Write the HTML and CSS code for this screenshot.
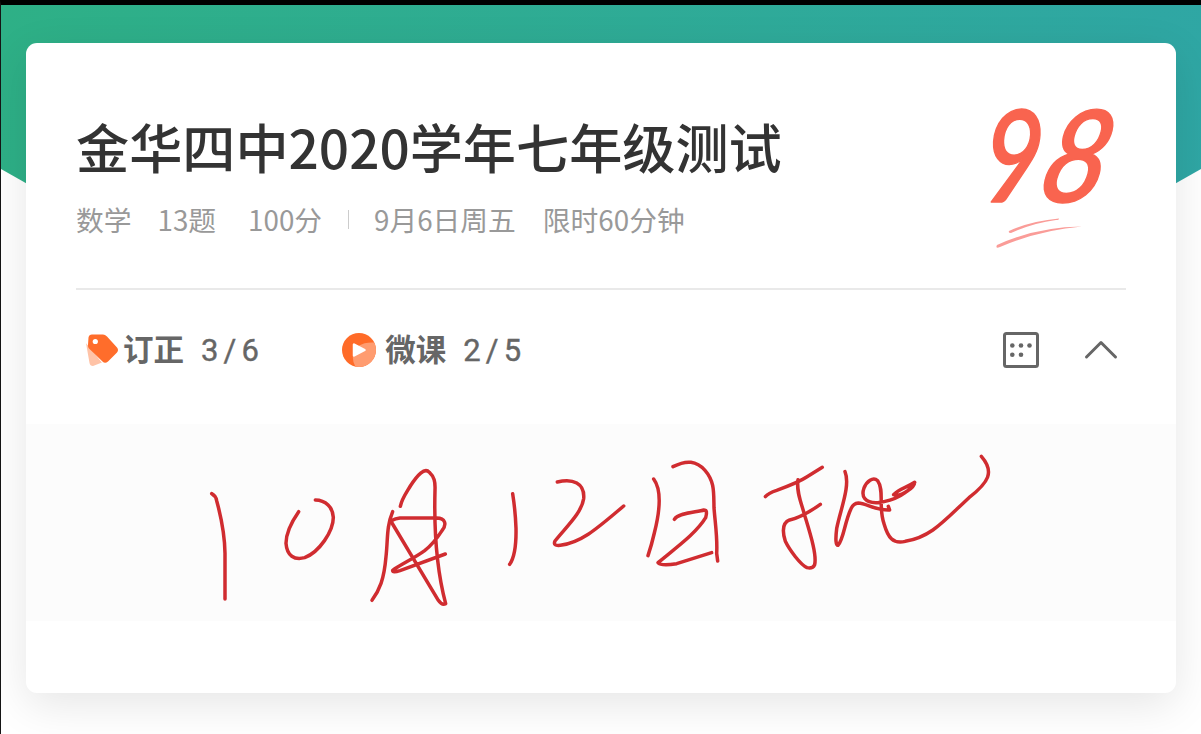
FILE: index.html
```html
<!DOCTYPE html>
<html lang="zh-CN">
<head>
<meta charset="utf-8">
<title>金华四中2020学年七年级测试</title>
<link rel="stylesheet" href="styles.css">
</head>
<body>
<div class="page">
  <div class="banner"></div>
  <main class="card">
    <header class="summary">
      <div class="heading">
        <h1 class="title">金华四中2020学年七年级测试</h1>
        <div class="meta">
          <span class="subject">数学</span>
          <span class="count">13题</span>
          <span class="points">100分</span>
          <i class="divider"></i>
          <span class="date">9月6日周五</span>
          <span>限时60分钟</span>
        </div>
      </div>
      <svg class="score" viewBox="0 0 170 170">
        <g class="digits">
          <text transform="translate(11 112) skewX(-3) scale(.82 1)">9</text>
          <text transform="translate(64 112) skewX(-14) scale(.9 1)">8</text>
        </g>
        <path class="swash" d="M39 141Q61 131 89 128.500Q89 130 86 130Q63 133 41 143Q38 143 39 141ZM27 155Q66 137 112 136.500Q70 140 30 157Q25 159 27 155Z"/>
      </svg>
    </header>
    <nav class="toolbar">
      <div class="entry">
        <svg class="icon tag" viewBox="0 0 34 34">
          <path d="M1 10L17 29.500L8 33Q5 33 4.500 30Z" fill="#ffc3a7"/>
          <path d="M2 7L19 28" stroke="#fff" stroke-width="5"/>
          <path d="M3.500 4.500Q4 1.500 7 1.500H18Q20 1.500 22 3.500L32 14.500Q34 17 32 19.500L23 28.500Q20 31 17.500 28.500L4 15.500Q2.800 14 3 12Z" fill="#ff6d2b"/>
          <circle cx="10.300" cy="8.500" r="2.600" fill="#fff"/>
        </svg>
        <span class="name">订正</span><span class="progress">3/6</span>
      </div>
      <div class="entry lesson">
        <svg class="icon play" viewBox="0 0 34 34">
          <defs><clipPath id="disc"><circle cx="17" cy="17" r="17"/></clipPath></defs>
          <g clip-path="url(#disc)">
            <path d="M0 0H34V34H0Z" fill="#ff6b28"/>
            <path d="M11 22C12 13 22 8 36 10V36H15Q10 30 11 22Z" fill="#ff9c70"/>
          </g>
          <path d="M12 11.500V22.500L22.500 17Z" fill="#fff" stroke="#fff" stroke-width="2.500" stroke-linejoin="round"/>
        </svg>
        <span class="name">微课</span><span class="progress">2/5</span>
      </div>
      <svg class="sheet" viewBox="0 0 36 36">
        <rect x="1.500" y="1.500" width="33" height="33" rx="2" fill="none" stroke="#666" stroke-width="3"/>
        <g fill="#666"><circle cx="9.300" cy="13.500" r="2.300"/><circle cx="18" cy="13.500" r="2.300"/><circle cx="26.500" cy="13.500" r="2.300"/><circle cx="9.300" cy="22.700" r="2.300"/><circle cx="18" cy="22.700" r="2.300"/></g>
      </svg>
      <svg class="chevron" viewBox="0 0 34 20"><path d="M2.500 17L17 2.500L31.500 17"/></svg>
    </nav>
    <section class="note">
      <svg class="ink" viewBox="0 0 1150 197">
        <g transform="translate(164 26) scale(.33333)">
          <path d="M65 131Q77 137 80 152Q104 240 105 310V447"/>
          <path d="M326 185C303 218 288 247 288 280C291 318 313 331 344 323C388 306 430 244 430 202C429 173 407 150 376 150"/>
          <path d="M608 185C589 231 594 266 588 320C582 389 569 419 546 451"/>
          <path d="M631 169C636 145 650 127 661 108C682 75 704 51 718 67C733 81 736 95 735 120C732 235 740 360 767 461Q756 467 745 451L606 219Q599 209 630 204H740C765 204 772 222 756 242C738 270 727 284 704 302C671 326 631 344 608 361Q607 369 630 362L766 312"/>
        </g>
        <g transform="translate(464 26) scale(.33333)">
          <path d="M68 131Q76 181 78 235C79 290 71 326 59 343"/>
          <path d="M202 96C248 84 285 99 281 146C275 188 232 227 195 273Q188 289 211 286C277 277 325 232 401 168"/>
          <path d="M491 87C517 122 508 190 493 249Q485 284 474 317"/>
          <path d="M549 50C590 29 619 32 645 61C674 94 671 127 672 173C675 216 683 264 680 310L683 333"/>
          <path d="M553 208C566 187 623 187 642 180Q654 180 647 203C619 249 562 290 504 338Q513 349 560 341L665 308"/>
        </g>
        <g transform="translate(724 16) scale(.33333)">
          <path d="M46 170Q55 159 80 151Q146 127 170 111L217 82"/>
          <path d="M144 119C138 155 155 191 164 226C179 276 201 343 194 374Q188 387 171 383C151 374 118 329 106 304C95 269 99 248 119 240C154 232 183 213 211 193"/>
          <path d="M285 95C302 137 271 209 260 266Q254 315 264 316C281 298 283 249 303 206Q310 190 325 189C349 190 378 212 419 210L415 199"/>
          <path d="M494 127C469 143 446 147 431 164Q446 171 472 153Q493 140 494 127C471 164 435 181 383 188C344 190 333 169 342 144C350 124 369 109 383 122C404 151 384 200 402 251C414 292 428 313 466 304C546 290 584 240 657 173C715 128 735 96 694 49"/>
        </g>
      </svg>
    </section>
  </main>
</div>
</body>
</html>
```
FILE: styles.css
```css
* { box-sizing: border-box; }
body {
  margin: 0;
  font-family: "Noto Sans CJK SC", sans-serif;
  background: #fff;
}
.page {
  position: relative;
  height: 734px;
  padding: 38px 25px 0;
  border-top: 5px solid #000;
  border-left: 1px solid #151515;
  overflow: hidden;
}
.banner {
  position: absolute;
  inset: 0 0 auto;
  height: 490px;
  background: linear-gradient(100deg, #2eb086, #2fa6a6);
  clip-path: polygon(0 0, 100% 0, 100% 164px, 50% 504px, 0 164px);
}
.card {
  position: relative;
  height: 650px;
  border-radius: 11px;
  background: #fff;
  box-shadow: 0 12px 44px rgba(0, 0, 0, .1);
}
.summary {
  display: flex;
  justify-content: space-between;
  height: 247px;
  margin: 0 50px;
  border-bottom: 2px solid #e9e9e9;
}
.heading { padding-top: 64px; white-space: nowrap; }
.title {
  margin: 0;
  color: #333;
  font-size: 53.150px;
  font-weight: 500;
  line-height: 78px;
}
.meta {
  display: flex;
  align-items: center;
  height: 40px;
  margin-top: 14px;
  color: #999;
  font-size: 27.750px;
  font-weight: 400;
}
.subject { margin-right: 26px; }
.count { margin-right: 32px; }
.points { margin-right: 26px; }
.divider { width: 1px; height: 19px; background: #ccc; margin-right: 25px; }
.date { margin-right: 27px; }
.score {
  width: 170px;
  height: 170px;
  margin: 47px -14px 0 0;
  overflow: visible;
}
.digits {
  font: italic 500 128px Lato, sans-serif;
  fill: #f9644f;
  stroke: #f9644f;
  stroke-width: 1.500px;
  stroke-linejoin: round;
}
.swash { fill: #fa9c98; }
.toolbar {
  display: flex;
  align-items: center;
  height: 120px;
  padding: 0 58px 0 59px;
  color: #666;
}
.entry { display: flex; align-items: center; }
.icon { width: 34px; height: 34px; }
.name {
  margin: 0 0 4px 4px;
  font-size: 30.500px;
  font-weight: 700;
  line-height: 44px;
}
.progress {
  margin-left: 17px;
  font: 400 31px Roboto, sans-serif;
  letter-spacing: 5.200px;
  -webkit-text-stroke: .4px #666;
}
.lesson { margin-left: 78px; }
.lesson .name { margin-left: 9px; }
.sheet { width: 36px; height: 36px; margin-left: auto; }
.chevron {
  width: 34px;
  height: 20px;
  margin-left: 45px;
  fill: none;
  stroke: #666;
  stroke-width: 3;
  stroke-linecap: round;
  stroke-linejoin: round;
}
.note { height: 197px; margin-top: 14px; background: #fcfcfc; }
.ink {
  display: block;
  width: 1150px;
  height: 197px;
  fill: none;
  stroke: #d02c30;
  stroke-width: 10.500;
  stroke-linecap: round;
  stroke-linejoin: round;
}
```
